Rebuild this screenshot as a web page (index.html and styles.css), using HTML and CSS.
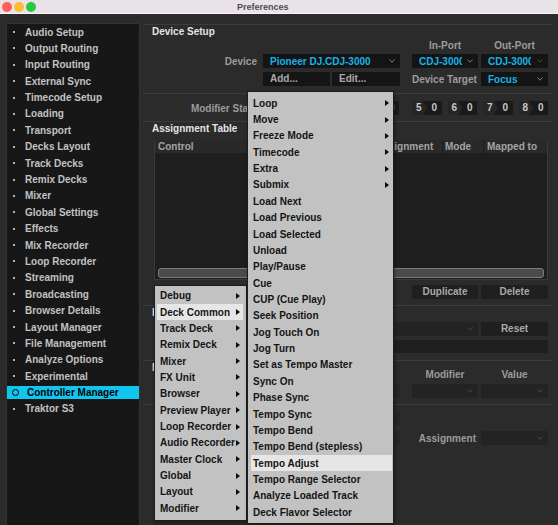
FILE: index.html
```html
<!DOCTYPE html>
<html lang="en">
<head>
    <meta charset="UTF-8">
    <meta name="viewport" content="width=device-width, initial-scale=1.0">
    <title>Preferences</title>
    <link rel="stylesheet" href="styles.css">
</head>
<body>
    <div class="titlebar">
        <div class="lights">
            <span class="light red"></span>
            <span class="light yellow"></span>
            <span class="light green"></span>
        </div>
        <div class="title">Preferences</div>
    </div>

    <div class="window">
        <ul class="sidebar">
            <li>Audio Setup</li>
            <li>Output Routing</li>
            <li>Input Routing</li>
            <li>External Sync</li>
            <li>Timecode Setup</li>
            <li>Loading</li>
            <li>Transport</li>
            <li>Decks Layout</li>
            <li>Track Decks</li>
            <li>Remix Decks</li>
            <li>Mixer</li>
            <li>Global Settings</li>
            <li>Effects</li>
            <li>Mix Recorder</li>
            <li>Loop Recorder</li>
            <li>Streaming</li>
            <li>Broadcasting</li>
            <li>Browser Details</li>
            <li>Layout Manager</li>
            <li>File Management</li>
            <li>Analyze Options</li>
            <li>Experimental</li>
            <li class="active">Controller Manager</li>
            <li>Traktor S3</li>
        </ul>

        <div class="main">
            <!-- Device Setup -->
            <div class="section-title">Device Setup</div>
            <div class="row top-labels">
                <span class="lbl"></span>
                <span class="c2"></span>
                <span class="c3 center">In-Port</span>
                <span class="c4 center">Out-Port</span>
            </div>
            <div class="row gap-2">
                <span class="lbl">Device</span>
                <div class="c2 dd"><span class="dd-text">Pioneer DJ.CDJ-3000</span><svg class="chev" viewBox="0 0 6 4"><path d="M0.5 0.5 L3 3.2 L5.5 0.5"/></svg></div>
                <div class="c3 dd"><span class="dd-text cut">CDJ-3000</span><svg class="chev" viewBox="0 0 6 4"><path d="M0.5 0.5 L3 3.2 L5.5 0.5"/></svg></div>
                <div class="c4 dd"><span class="dd-text cut">CDJ-3000</span><svg class="chev dim" viewBox="0 0 6 4"><path d="M0.5 0.5 L3 3.2 L5.5 0.5"/></svg></div>
            </div>
            <div class="row gap-4">
                <span class="lbl"></span>
                <div class="c2 split">
                    <span class="btn left add">Add...</span>
                    <span class="btn left edit">Edit...</span>
                </div>
                <span class="c3 side-label">Device Target</span>
                <div class="c4 dd"><span class="dd-text">Focus</span><svg class="chev" viewBox="0 0 6 4"><path d="M0.5 0.5 L3 3.2 L5.5 0.5"/></svg></div>
            </div>
            <div class="sep sep-a"></div>
            <div class="row gap-7">
                <span class="lbl">Modifier State</span>
                <div class="c2 mods">
                    <span class="mod"><span class="mod-n">1</span><span class="mod-v">0</span></span>
                    <span class="mod"><span class="mod-n">2</span><span class="mod-v">0</span></span>
                    <span class="mod"><span class="mod-n">3</span><span class="mod-v">0</span></span>
                    <span class="mod"><span class="mod-n">4</span><span class="mod-v">0</span></span>
                </div>
                <div class="mods wide">
                    <span class="mod"><span class="mod-n">5</span><span class="mod-v">0</span></span>
                    <span class="mod"><span class="mod-n">6</span><span class="mod-v">0</span></span>
                    <span class="mod"><span class="mod-n">7</span><span class="mod-v">0</span></span>
                    <span class="mod"><span class="mod-n">8</span><span class="mod-v">0</span></span>
                </div>
            </div>
            <div class="sep sep-b"></div>

            <!-- Assignment Table -->
            <div class="section-title">Assignment Table</div>
            <div class="table">
                <div class="thead">
                    <span class="th th-control">Control</span>
                    <span class="th th-assign">Assignment</span>
                    <span class="th th-mode">Mode</span>
                    <span class="th th-mapped">Mapped to</span>
                </div>
                <div class="tbody">
                    <div class="hscroll"></div>
                </div>
            </div>
            <div class="row gap-5">
                <span class="lbl"></span>
                <span class="c2"></span>
                <span class="c3 btn">Duplicate</span>
                <span class="c4 btn">Delete</span>
            </div>
            <div class="sep sep-c"></div>

            <!-- Device Mapping -->
            <div class="section-title">Device Mapping</div>
            <div class="row gap-3">
                <span class="lbl"></span>
                <div class="c23 dd soft"><span class="dd-text"></span><svg class="chev dim" viewBox="0 0 6 4"><path d="M0.5 0.5 L3 3.2 L5.5 0.5"/></svg></div>
                <span class="c4 btn">Reset</span>
            </div>
            <div class="row gap-4">
                <span class="lbl"></span>
                <span class="bar"></span>
            </div>
            <div class="sep sep-d"></div>

            <!-- Mapping Details -->
            <div class="row details-head">
                <span class="lbl details-title">Mapping Details</span>
                <span class="c2"></span>
                <span class="c3 center">Modifier</span>
                <span class="c4 center">Value</span>
            </div>
            <div class="row gap-3">
                <span class="lbl"></span>
                <span class="c2 box"></span>
                <div class="c3 dd soft"><span></span><svg class="chev dim" viewBox="0 0 6 4"><path d="M0.5 0.5 L3 3.2 L5.5 0.5"/></svg></div>
                <div class="c4 dd soft"><span></span><svg class="chev dim" viewBox="0 0 6 4"><path d="M0.5 0.5 L3 3.2 L5.5 0.5"/></svg></div>
            </div>
            <div class="sep sep-e"></div>
            <div class="row gap-7">
                <span class="lbl"></span>
                <span class="c2 box"></span>
            </div>
            <div class="row gap-5">
                <span class="lbl"></span>
                <span class="c2 box"></span>
                <span class="c3 side-label">Assignment</span>
                <div class="c4 dd soft"><span></span><svg class="chev dim" viewBox="0 0 6 4"><path d="M0.5 0.5 L3 3.2 L5.5 0.5"/></svg></div>
            </div>
        </div>
    </div>

    <!-- Context menus -->
    <div class="menu menu-left">
        <div class="item sub">Debug</div>
        <div class="item sub hl">Deck Common</div>
        <div class="item sub">Track Deck</div>
        <div class="item sub">Remix Deck</div>
        <div class="item sub">Mixer</div>
        <div class="item sub">FX Unit</div>
        <div class="item sub">Browser</div>
        <div class="item sub">Preview Player</div>
        <div class="item sub">Loop Recorder</div>
        <div class="item sub">Audio Recorder</div>
        <div class="item sub">Master Clock</div>
        <div class="item sub">Global</div>
        <div class="item sub">Layout</div>
        <div class="item sub">Modifier</div>
    </div>

    <div class="menu menu-right">
        <div class="item sub">Loop</div>
        <div class="item sub">Move</div>
        <div class="item sub">Freeze Mode</div>
        <div class="item sub">Timecode</div>
        <div class="item sub">Extra</div>
        <div class="item sub">Submix</div>
        <div class="item">Load Next</div>
        <div class="item">Load Previous</div>
        <div class="item">Load Selected</div>
        <div class="item">Unload</div>
        <div class="item">Play/Pause</div>
        <div class="item">Cue</div>
        <div class="item">CUP (Cue Play)</div>
        <div class="item">Seek Position</div>
        <div class="item">Jog Touch On</div>
        <div class="item">Jog Turn</div>
        <div class="item">Set as Tempo Master</div>
        <div class="item">Sync On</div>
        <div class="item">Phase Sync</div>
        <div class="item">Tempo Sync</div>
        <div class="item">Tempo Bend</div>
        <div class="item">Tempo Bend (stepless)</div>
        <div class="item hl">Tempo Adjust</div>
        <div class="item">Tempo Range Selector</div>
        <div class="item">Analyze Loaded Track</div>
        <div class="item">Deck Flavor Selector</div>
    </div>
</body>
</html>
```

FILE: styles.css
```css
:root {
    --bg: #2b2b2b;
    --sidebar-bg: #171717;
    --line: #3c3c3c;
    --label: #9c9c9c;
    --text: #c2c2c2;
    --cyan: #17b3e6;
    --select: #10c6ef;
    --menu-bg: #c2c2c2;
    --menu-hl: #e6e6e6;
}

* {
    box-sizing: border-box;
}

body {
    margin: 0;
    width: 558px;
    height: 525px;
    overflow: hidden;
    position: relative;
    background: var(--bg);
    font-family: 'Liberation Sans', Arial, sans-serif;
    font-size: 10px;
    font-weight: bold;
    color: var(--text);
}

/* title bar */
.titlebar {
    height: 14px;
    background: #e9e3e9;
    border-bottom: 1px solid #f7f3f7;
    display: flex;
    align-items: center;
}

.lights {
    display: flex;
    gap: 2px;
    margin-left: 2px;
}

.light {
    width: 10px;
    height: 10px;
    border-radius: 50%;
}

.red { background: #fe5f57; }
.yellow { background: #febc2e; }
.green { background: #28c840; }

.title {
    margin-left: 201px;
    font-size: 9px;
    color: #4d4d4d;
}

/* layout */
.window {
    display: flex;
    align-items: flex-start;
}

.sidebar {
    list-style: none;
    margin: 9px 0 0 6px;
    padding: 1.5px 0 0;
    width: 134px;
    height: 520px;
    background: var(--sidebar-bg);
    border: 1px solid #333;
}

.sidebar li {
    display: flex;
    align-items: center;
    height: 13px;
    margin-bottom: 3.4px;
    padding-left: 6px;
    white-space: nowrap;
}

.sidebar li::before {
    content: "";
    width: 2px;
    height: 2px;
    margin-right: 10px;
    background: #b5b5b5;
}

.sidebar li.active {
    background: var(--select);
    color: #000;
}

.sidebar li.active::before {
    width: 5px;
    height: 5px;
    margin-left: -1.5px;
    margin-right: 8.5px;
    background: none;
    border: 1px solid #000;
    border-radius: 50%;
}

.main {
    margin: 10px 0 0 3px;
    width: 409px;
    border-top: 1px solid var(--line);
}

.section-title {
    height: 13px;
    line-height: 13px;
    padding-left: 9px;
    color: #e4e4e4;
}

.row {
    display: flex;
    align-items: center;
}

.top-labels {
    margin-top: 2px;
    height: 12px;
    line-height: 12px;
    color: var(--label);
}

.gap-2 { margin-top: 2px; }
.gap-3 { margin-top: 3px; }
.gap-4 { margin-top: 4px; }
.gap-5 { margin-top: 5px; }
.gap-7 { margin-top: 7px; }

.lbl {
    width: 114px;
    margin-right: 6px;
    text-align: right;
    color: var(--label);
    white-space: nowrap;
}

.c2 { width: 137px; margin-right: 12px; flex: none; }
.c3 { width: 66px; margin-right: 3px; flex: none; }
.c4 { width: 67px; flex: none; }
.c23 { width: 215px; margin-right: 3px; flex: none; }

.center {
    text-align: center;
}

.side-label {
    text-align: right;
    padding-right: 2px;
    color: var(--label);
    white-space: nowrap;
}

/* dropdowns and buttons */
.dd {
    height: 14px;
    display: flex;
    align-items: center;
    justify-content: space-between;
    padding: 0 5px 0 7px;
    background: #141414;
    color: var(--cyan);
    overflow: hidden;
}

.dd.soft {
    background: #232323;
}

.dd-text {
    white-space: nowrap;
}

.dd-text.cut {
    width: 43px;
    overflow: hidden;
}

.chev {
    width: 6px;
    height: 4px;
    flex: none;
    fill: none;
    stroke: #8a8a8a;
    stroke-width: 0.9;
}

.chev.dim {
    stroke: #4e4e4e;
}

.split {
    display: flex;
    gap: 2px;
}

.btn {
    height: 14px;
    line-height: 14px;
    background: #1f1f1f;
    color: #a9a9a9;
    text-align: center;
}

.btn.left {
    text-align: left;
    padding-left: 7px;
    background: #151515;
}

.add { width: 67px; }
.edit { width: 68px; }

.sep {
    height: 1px;
    background: var(--line);
}

.sep-a { margin-top: 7px; }
.sep-b { margin-top: 6px; }
.sep-c { margin-top: 6px; }
.sep-d { margin-top: 7px; }
.sep-e { margin-top: 6px; }

/* modifier state */
.mods {
    display: flex;
    gap: 6px;
}

.mods.wide {
    width: 136px;
}

.mod {
    width: 29.5px;
    height: 14px;
    line-height: 14px;
    display: flex;
    background: #1a1a1a;
    color: #c8c8c8;
}

.mod-n {
    width: 15px;
    padding-left: 4px;
    background: #262626;
    clip-path: polygon(0 0, 70% 0, 100% 50%, 70% 100%, 0 100%);
}

.mod-v {
    flex: 1;
    text-align: center;
}

/* assignment table */
.table {
    margin: 5px 0 0 11px;
    width: 394px;
    border: 1px solid #3a3a3a;
    border-top: none;
}

.thead {
    display: flex;
    height: 13px;
    line-height: 13px;
    background: #292929;
    color: #a4a4a4;
}

.th {
    padding-left: 3px;
    border-right: 1px solid #1c1c1c;
    white-space: nowrap;
}

.th-control { width: 218px; }
.th-assign { width: 70px; }
.th-mode { width: 41px; padding-left: 2px; }
.th-mapped { flex: 1; border-right: none; }

.tbody {
    height: 126px;
    background: #1e1e1e;
    display: flex;
    flex-direction: column;
    justify-content: flex-end;
    padding: 0 3px 1px 3px;
}

.hscroll {
    height: 10px;
    border: 1px solid #7c7c7c;
    border-radius: 3px;
    background: #4b4b4b;
}

/* device mapping / details */
.bar {
    width: 285px;
    height: 13px;
    background: #1e1e1e;
}

.details-head {
    height: 20px;
    align-items: flex-end;
    line-height: 12px;
    color: var(--label);
}

.details-title {
    align-self: flex-start;
    text-align: left;
    padding-left: 9px;
    line-height: 13px;
    color: #e4e4e4;
}

.box {
    height: 14px;
    background: #262626;
}

/* popup menus */
.menu {
    position: absolute;
    background: var(--menu-bg);
    border: 1px solid #1c1c1c;
    color: #141414;
    box-shadow: 1px 2px 4px rgba(0, 0, 0, 0.35);
}

.menu-left {
    left: 154px;
    top: 285px;
    width: 93px;
    padding: 1.5px 3px 3px 2px;
}

.menu-right {
    left: 247px;
    top: 91px;
    width: 147px;
    padding: 3px 1px 3px 3px;
}

.item {
    height: 16.37px;
    display: flex;
    align-items: center;
    justify-content: space-between;
    padding: 0 3px 0 2px;
    white-space: nowrap;
}

.menu-left .item {
    padding-left: 3px;
}

.item.hl {
    background: var(--menu-hl);
}

.item.sub::after {
    content: "";
    border-left: 4px solid #0c0c0c;
    border-top: 3px solid transparent;
    border-bottom: 3px solid transparent;
}
```
